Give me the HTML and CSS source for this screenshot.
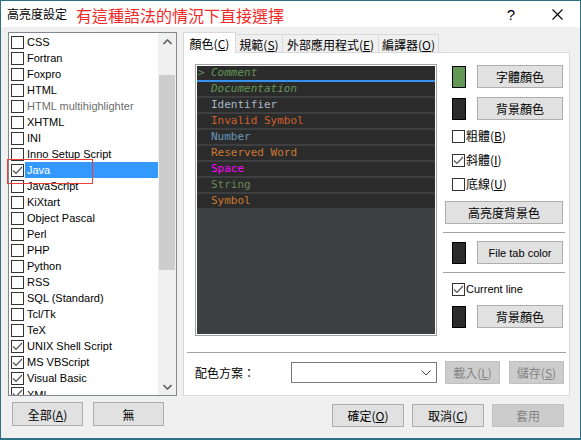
FILE: index.html
```html
<!DOCTYPE html>
<html>
<head>
<meta charset="utf-8">
<link rel="stylesheet" href="styles.css">
</head>
<body>
<div class="window">
  <div class="titlebar">
    <span class="title">高亮度設定</span>
    <span class="note">有這種語法的情況下直接選擇</span>
    <span class="caption help">?</span>
    <span class="caption close"><svg width="11" height="11" viewBox="0 0 11 11"><path d="M0.5 0.5L10.5 10.5M10.5 0.5L0.5 10.5" stroke="#000" stroke-width="1.1" fill="none"/></svg></span>
  </div>
  <div class="main">
    <div class="left">
      <div class="listbox">
        <div class="items">
          <div class="item"><span class="cb"></span><span class="lbl">CSS</span></div>
          <div class="item"><span class="cb"></span><span class="lbl">Fortran</span></div>
          <div class="item"><span class="cb"></span><span class="lbl">Foxpro</span></div>
          <div class="item"><span class="cb"></span><span class="lbl">HTML</span></div>
          <div class="item"><span class="cb"></span><span class="lbl dim">HTML multihighlighter</span></div>
          <div class="item"><span class="cb"></span><span class="lbl">XHTML</span></div>
          <div class="item"><span class="cb"></span><span class="lbl">INI</span></div>
          <div class="item"><span class="cb"></span><span class="lbl">Inno Setup Script</span></div>
          <div class="item"><span class="cb"><svg class="tick" width="11" height="11" viewBox="0 0 11 11"><path d="M1 5.5L4 8.5L10 2" stroke="#555" stroke-width="1.2" fill="none"/></svg></span><span class="lbl sel">Java</span></div>
          <div class="item"><span class="cb"></span><span class="lbl">JavaScript</span></div>
          <div class="item"><span class="cb"></span><span class="lbl">KiXtart</span></div>
          <div class="item"><span class="cb"></span><span class="lbl">Object Pascal</span></div>
          <div class="item"><span class="cb"></span><span class="lbl">Perl</span></div>
          <div class="item"><span class="cb"></span><span class="lbl">PHP</span></div>
          <div class="item"><span class="cb"></span><span class="lbl">Python</span></div>
          <div class="item"><span class="cb"></span><span class="lbl">RSS</span></div>
          <div class="item"><span class="cb"></span><span class="lbl">SQL (Standard)</span></div>
          <div class="item"><span class="cb"></span><span class="lbl">Tcl/Tk</span></div>
          <div class="item"><span class="cb"></span><span class="lbl">TeX</span></div>
          <div class="item"><span class="cb"><svg class="tick" width="11" height="11" viewBox="0 0 11 11"><path d="M1 5.5L4 8.5L10 2" stroke="#555" stroke-width="1.2" fill="none"/></svg></span><span class="lbl">UNIX Shell Script</span></div>
          <div class="item"><span class="cb"><svg class="tick" width="11" height="11" viewBox="0 0 11 11"><path d="M1 5.5L4 8.5L10 2" stroke="#555" stroke-width="1.2" fill="none"/></svg></span><span class="lbl">MS VBScript</span></div>
          <div class="item"><span class="cb"><svg class="tick" width="11" height="11" viewBox="0 0 11 11"><path d="M1 5.5L4 8.5L10 2" stroke="#555" stroke-width="1.2" fill="none"/></svg></span><span class="lbl">Visual Basic</span></div>
          <div class="item last"><span class="cb"><svg class="tick" width="11" height="11" viewBox="0 0 11 11"><path d="M1 5.5L4 8.5L10 2" stroke="#555" stroke-width="1.2" fill="none"/></svg></span><span class="lbl">XML</span></div>
        </div>
        <div class="vscroll">
          <div class="arrow"><svg width="9" height="6" viewBox="0 0 9 6"><path d="M0.5 5L4.5 1L8.5 5" stroke="#606060" stroke-width="1.6" fill="none"/></svg></div>
          <div class="track"><div class="thumb"></div></div>
          <div class="arrow"><svg width="9" height="6" viewBox="0 0 9 6"><path d="M0.5 1L4.5 5L8.5 1" stroke="#606060" stroke-width="1.6" fill="none"/></svg></div>
        </div>
        <div class="redmark"></div>
      </div>
      <div class="leftbtns">
        <span class="btn">全部(<u>A</u>)</span>
        <span class="btn">無</span>
      </div>
    </div>
    <div class="right">
      <div class="tabs">
        <span class="tab active t1">顏色(<u>C</u>)</span>
        <span class="tab t2">規範(<u>S</u>)</span>
        <span class="tab t3">外部應用程式(<u>E</u>)</span>
        <span class="tab t4">編譯器(<u>O</u>)</span>
      </div>
      <div class="panel">
        <div class="editor">
          <div class="codebox">
            <div class="code">
              <div class="row first"><span class="mark">&gt;</span><span class="c-comment">Comment</span></div>
              <div class="row"><span class="c-comment">Documentation</span></div>
              <div class="row"><span class="c-ident">Identifier</span></div>
              <div class="row"><span class="c-invalid">Invalid Symbol</span></div>
              <div class="row"><span class="c-number">Number</span></div>
              <div class="row"><span class="c-reserved">Reserved Word</span></div>
              <div class="row"><span class="c-space">Space</span></div>
              <div class="row"><span class="c-string">String</span></div>
              <div class="row"><span class="c-symbol">Symbol</span></div>
            </div>
          </div>
          <div class="controls">
            <div class="crow r1"><span class="swatch green"></span><span class="btn wide">字體顏色</span></div>
            <div class="crow r2"><span class="swatch dark"></span><span class="btn wide">背景顏色</span></div>
            <div class="check c1"><span class="cb"></span><span>粗體(<u>B</u>)</span></div>
            <div class="check"><span class="cb"><svg class="tick" width="11" height="11" viewBox="0 0 11 11"><path d="M1 5.5L4 8.5L10 2" stroke="#555" stroke-width="1.2" fill="none"/></svg></span><span>斜體(<u>I</u>)</span></div>
            <div class="check"><span class="cb"></span><span>底線(<u>U</u>)</span></div>
            <span class="btn full">高亮度背景色</span>
            <div class="sep"></div>
            <div class="crow r3"><span class="swatch dark"></span><span class="btn wide latin">File tab color</span></div>
            <div class="sep s2"></div>
            <div class="check c4"><span class="cb"><svg class="tick" width="11" height="11" viewBox="0 0 11 11"><path d="M1 5.5L4 8.5L10 2" stroke="#555" stroke-width="1.2" fill="none"/></svg></span><span>Current line</span></div>
            <div class="crow r4"><span class="swatch dark"></span><span class="btn wide">背景顏色</span></div>
          </div>
        </div>
        <div class="hsep"></div>
        <div class="scheme">
          <span class="slabel">配色方案：</span>
          <span class="combo"><svg width="10" height="6" viewBox="0 0 10 6"><path d="M0.5 0.5L5 5L9.5 0.5" stroke="#404040" stroke-width="1" fill="none"/></svg></span>
          <span class="btn small disabled">載入(<u>L</u>)</span>
          <span class="btn small disabled">儲存(<u>S</u>)</span>
        </div>
      </div>
      <div class="footer">
        <span class="btn foot">確定(<u>O</u>)</span>
        <span class="btn foot">取消(<u>C</u>)</span>
        <span class="btn foot disabled">套用</span>
      </div>
    </div>
  </div>
</div>
</body>
</html>
```
FILE: styles.css
```css
* { box-sizing: border-box; }
html, body { margin: 0; padding: 0; }
body {
  width: 581px;
  height: 440px;
  overflow: hidden;
  background: #f0f0f0;
  font-family: "Liberation Sans", "Noto Sans CJK TC", sans-serif;
  font-size: 12px;
  color: #000;
}
u { text-decoration: underline; text-underline-offset: 1px; }
.window {
  width: 581px;
  height: 440px;
  border: 1px solid #2d7282;
  border-bottom-width: 2px;
  background: #f0f0f0;
  display: flex;
  flex-direction: column;
}
.titlebar {
  height: 26px;
  background: #fff;
  display: flex;
  align-items: center;
}
.title {
  font-family: "Noto Sans CJK TC", sans-serif;
  font-size: 12px;
  padding-left: 6px;
  line-height: 16px;
}
.note {
  font-family: "Noto Sans CJK TC", sans-serif;
  font-size: 16px;
  color: #f12a2a;
  margin-left: 9px;
  line-height: 20px;
  margin-top: 2px;
}
.caption {
  width: 46px;
  height: 26px;
  display: flex;
  align-items: center;
  justify-content: center;
}
.help {
  margin-left: auto;
  font-family: "Liberation Sans", sans-serif;
  font-size: 15px;
}
.main {
  flex: 1;
  display: flex;
  padding: 5px 0 0 7px;
  gap: 6px;
}
.left { width: 169px; display: flex; flex-direction: column; }
.listbox {
  position: relative;
  height: 364px;
  border: 1px solid #828790;
  background: #fff;
  display: flex;
}
.items {
  width: 149px;
  padding-top: 1px;
  overflow: hidden;
}
.item {
  height: 16px;
  display: flex;
  align-items: center;
  font-size: 11px;
  white-space: nowrap;
}
.item.last { align-items: flex-start; padding-top: 1px; }
.cb {
  width: 13px;
  height: 13px;
  border: 1px solid #333;
  background: #fff;
  flex: none;
  display: inline-flex;
  align-items: center;
  justify-content: center;
}
.items .cb { margin-left: 2px; }
.lbl {
  height: 16px;
  line-height: 16px;
  padding-left: 2px;
  margin-left: 1px;
}
.lbl.dim { color: #6d6d6d; }
.lbl.sel {
  background: #3399ff;
  color: #fff;
  flex: 1;
}
.vscroll {
  width: 18px;
  background: #f0f0f0;
  display: flex;
  flex-direction: column;
}
.arrow {
  height: 17px;
  display: flex;
  align-items: center;
  justify-content: center;
}
.track { flex: 1; padding: 25px 1px 0 1px; }
.thumb { height: 195px; background: #cdcdcd; }
.redmark {
  position: absolute;
  left: -2px;
  top: 126px;
  width: 86px;
  height: 25px;
  border: 1.5px solid #e8403c;
}
.leftbtns {
  display: flex;
  gap: 10px;
  margin-top: 6px;
  padding-left: 4px;
}
.btn {
  display: inline-flex;
  align-items: center;
  justify-content: center;
  background: #e1e1e1;
  border: 1px solid #adadad;
  font-family: "Noto Sans CJK TC", sans-serif;
  font-size: 12px;
  height: 24px;
  white-space: nowrap;
}
.btn.latin { font-family: "Liberation Sans", sans-serif; font-size: 11px; }
.leftbtns .btn { width: 71px; }
.btn.disabled { background: #cccccc; border-color: #bfbfbf; color: #838383; }
.right { width: 387px; display: flex; flex-direction: column; }
.tabs { display: flex; height: 20px; align-items: flex-end; position: relative; z-index: 1; }
.tab {
  height: 18px;
  border: 1px solid #d9d9d9;
  border-bottom: none;
  background: #f0f0f0;
  margin-left: -1px;
  display: flex;
  align-items: center;
  justify-content: center;
  font-family: "Noto Sans CJK TC", sans-serif;
  font-size: 12px;
  padding-top: 1px;
}
.tab.active { height: 21px; background: #fff; margin-left: 0; margin-bottom: -1px; padding-top: 0; }
.t1 { width: 53px; }
.t2 { width: 48px; }
.t3 { width: 97px; }
.t4 { width: 61px; }
.panel {
  height: 344px;
  border: 1px solid #d9d9d9;
  background: #fff;
  padding: 11px 3px 0 3px;
}
.editor { display: flex; gap: 8px; padding-left: 8px; }
.codebox {
  width: 242px;
  height: 272px;
  border: 1px solid #a0a0a0;
  padding: 1px;
  background: #fff;
}
.code {
  height: 100%;
  background: #3e3f41;
  font-family: "DejaVu Sans Mono", monospace;
  font-size: 11px;
}
.row {
  height: 14px;
  line-height: 14px;
  margin-bottom: 2px;
  background: #2b2b2b;
  padding-left: 14px;
  position: relative;
  white-space: nowrap;
}
.row.first { border-bottom: 2px solid #3592f0; height: 16px; margin-bottom: 0; }
.mark { position: absolute; left: 1px; top: 0; color: #629755; }
.c-comment { color: #629755; font-style: italic; }
.c-ident { color: #a9b7c6; }
.c-invalid { color: #d0602c; }
.c-number { color: #6897bb; }
.c-reserved { color: #cc7832; }
.c-space { color: #ff00ff; }
.c-string { color: #6a8759; }
.c-symbol { color: #cc7832; }
.controls { width: 118px; display: flex; flex-direction: column; }
.crow { display: flex; align-items: center; height: 23px; flex: none; }
.r1 { margin-top: 1px; }
.r2 { margin-top: 9px; }
.swatch {
  width: 14px;
  height: 22px;
  border: 1px solid #000;
  margin-left: 7px;
  margin-right: 11px;
}
.swatch.green { background: #629755; }
.swatch.dark { background: #2b2b2b; }
.btn.wide { width: 86px; height: 23px; }
.check {
  display: flex;
  align-items: center;
  height: 16px;
  flex: none;
  overflow: visible;
  margin-top: 8px;
  padding-left: 7px;
  gap: 1px;
  font-family: "Noto Sans CJK TC", sans-serif;
  font-size: 12px;
  line-height: 16px;
}
.c1 { margin-top: 8px; }
.c4 { margin-top: 8px; font-family: "Liberation Sans", sans-serif; font-size: 11px; }
.btn.full { width: 118px; height: 23px; margin-top: 9px; flex: none; }
.sep { height: 1px; background: #a0a0a0; margin: 8px -2px 0 -2px; flex: none; }
.r3 { margin-top: 8px; }
.s2 { margin-top: 8px; }
.r4 { margin-top: 8px; }
.hsep { height: 1px; background: #a0a0a0; margin-top: 16px; }
.scheme { display: flex; align-items: center; height: 23px; margin-top: 8px; }
.slabel {
  font-family: "Noto Sans CJK TC", sans-serif;
  font-size: 12px;
  margin-left: 8px;
  width: 96px;
}
.combo {
  width: 146px;
  height: 21px;
  border: 1px solid #7a7a7a;
  background: #fff;
  display: flex;
  align-items: center;
  justify-content: flex-end;
  padding-right: 5px;
}
.btn.small { width: 55px; height: 23px; margin-left: 8px; }
.btn.small + .btn.small { margin-left: 9px; }
.footer {
  display: flex;
  justify-content: flex-end;
  gap: 8px;
  margin-top: 8px;
  padding-right: 6px;
}
.btn.foot { width: 72px; height: 23px; }
```
